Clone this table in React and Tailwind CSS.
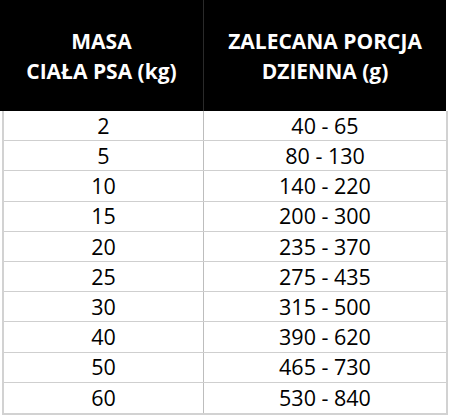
const rows = [
  ["2", "40 - 65"],
  ["5", "80 - 130"],
  ["10", "140 - 220"],
  ["15", "200 - 300"],
  ["20", "235 - 370"],
  ["25", "275 - 435"],
  ["30", "315 - 500"],
  ["40", "390 - 620"],
  ["50", "465 - 730"],
  ["60", "530 - 840"],
];

export default function App() {
  return (
    <div className="h-[417px] w-[450px] overflow-hidden bg-white font-['Open_Sans',sans-serif] text-black">
      {/* header */}
      <div className="flex h-[111px] w-[446px] bg-black text-[21px] font-bold leading-[30px] text-white">
        <div className="flex w-[204px] flex-col items-center justify-center border-r border-[#2a2a2a] text-center">
          <span>MASA</span>
          <span>CIAŁA PSA (kg)</span>
        </div>
        <div className="flex flex-1 flex-col items-center justify-center text-center">
          <span>ZALECANA PORCJA</span>
          <span>DZIENNA (g)</span>
        </div>
      </div>
      {/* body */}
      <div className="ml-[2px] w-[446px] border-x-2 border-b-2 border-[#d2d2d2]">
        {rows.map(([mass, portion], i) => (
          <div
            key={mass}
            className={`flex h-[30.2px] text-[21.5px] leading-none ${i < rows.length - 1 ? "border-b border-[#cfcfcf]" : ""}`}
          >
            <div className="flex w-[200px] items-center justify-center border-r border-[#bdbdbd]">{mass}</div>
            <div className="flex flex-1 items-center justify-center">{portion}</div>
          </div>
        ))}
      </div>
    </div>
  );
}
